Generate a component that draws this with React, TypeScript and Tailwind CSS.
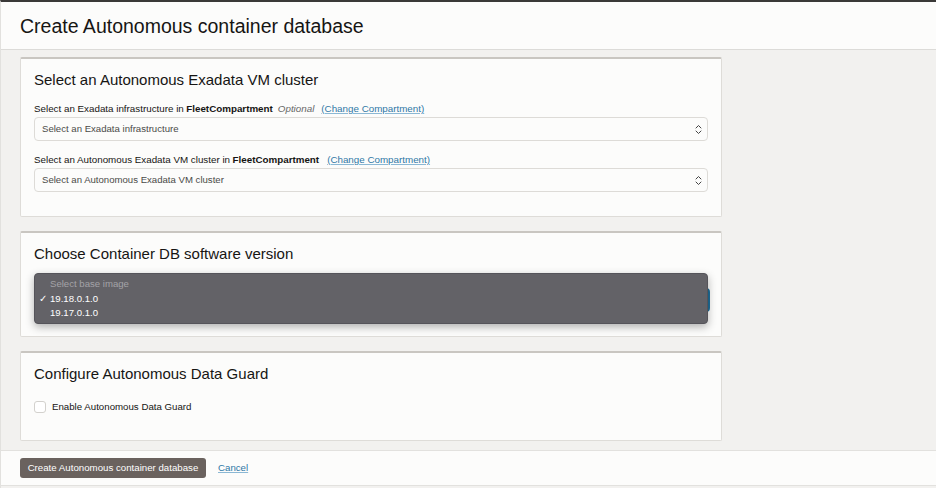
import React from "react";

function Chevrons() {
  return (
    <svg width="7" height="11" viewBox="0 0 7 11" className="shrink-0">
      <path d="M1 4 L3.5 1.5 L6 4" fill="none" stroke="#444" strokeWidth="1" strokeLinecap="round" strokeLinejoin="round" />
      <path d="M1 7 L3.5 9.5 L6 7" fill="none" stroke="#444" strokeWidth="1" strokeLinecap="round" strokeLinejoin="round" />
    </svg>
  );
}

function Select({ placeholder }: { placeholder: string }) {
  return (
    <div className="h-[24px] w-[674px] rounded-[4px] border border-[#dddbd7] bg-[#fcfcfb] flex items-center justify-between pl-[7px] pr-[5px]">
      <span className="text-[9.6px] text-[#4a4a48]">{placeholder}</span>
      <Chevrons />
    </div>
  );
}

function Card({ title, children, pb }: { title: string; children?: React.ReactNode; pb: string }) {
  return (
    <div className={`w-[702px] bg-[#fcfcfb] border border-[#dedcd8] border-t-2 border-t-[#c9c6c1] rounded-[2px] pl-[13px] pt-[11px] ${pb}`}>
      <div className="text-[15px] leading-[20px] text-[#161513]">{title}</div>
      {children}
    </div>
  );
}

export default function App() {
  return (
    <div className="w-[936px] h-[488px] bg-[#f2f1ef] flex flex-col border-t-2 border-t-[#3a3938] border-l border-l-[#e2e1de] font-['Liberation_Sans',Arial,sans-serif] text-[#161513] overflow-hidden">
      <header className="h-[48px] shrink-0 bg-[#fcfcfb] border-b border-b-[#dcdbd8] flex items-center pl-[19px]">
        <h1 className="text-[19.5px] leading-[24px] text-[#161513]">Create Autonomous container database</h1>
      </header>

      <main className="flex-1 flex flex-col gap-[14px] pl-[19px] pt-[7px]">
        <Card title="Select an Autonomous Exadata VM cluster" pb="pb-[24px]">
          <div className="mt-[13px] text-[9.8px] leading-[12px] flex items-center">
            <span>Select an Exadata infrastructure in </span>
            <span className="font-bold ml-[2.5px]">FleetCompartment</span>
            <span className="italic text-[#666] ml-[5px]">Optional</span>
            <span className="ml-[7px] text-[#2f78a6] underline decoration-[#8bb8d4]">(Change Compartment)</span>
          </div>
          <div className="mt-[2px]">
            <Select placeholder="Select an Exadata infrastructure" />
          </div>
          <div className="mt-[13px] text-[9.8px] leading-[12px] flex items-center">
            <span>Select an Autonomous Exadata VM cluster in </span>
            <span className="font-bold ml-[2.5px]">FleetCompartment</span>
            <span className="ml-[8px] text-[#2f78a6] underline decoration-[#8bb8d4]">(Change Compartment)</span>
          </div>
          <div className="mt-[2px]">
            <Select placeholder="Select an Autonomous Exadata VM cluster" />
          </div>
        </Card>

        <Card title="Choose Container DB software version" pb="pb-[24px]">
          <div className="mt-[24px] relative w-[676px]">
            <div className="h-[24px] w-[676px] rounded-[4px] border-2 border-[#1f6e98] bg-[#fcfcfb]" />
            <div className="absolute left-0 top-[-15px] w-[674px] h-[51px] rounded-[4px] bg-[#636267] border border-[#55545a] shadow-[0_3px_8px_rgba(0,0,0,0.3)] pt-[3px] text-[9.6px] leading-[14.5px]">
              <div className="pl-[15px] text-[#a3a3a7]">Select base image</div>
              <div className="flex items-center text-white">
                <span className="w-[15px] pl-[4px] text-[10px]">✓</span>
                <span>19.18.0.1.0</span>
              </div>
              <div className="pl-[15px] text-white">19.17.0.1.0</div>
            </div>
          </div>
        </Card>

        <Card title="Configure Autonomous Data Guard" pb="pb-[27px]">
          <div className="mt-[17px] flex items-center gap-[6px]">
            <div className="w-[12px] h-[12px] rounded-[3px] border border-[#d3d1cd] bg-white" />
            <span className="text-[9.7px] leading-[12px]">Enable Autonomous Data Guard</span>
          </div>
        </Card>
      </main>

      <footer className="h-[36px] shrink-0 mb-[2px] bg-[#fcfcfb] border-t border-t-[#e2e1de] border-b border-b-[#e2e1de] flex items-center pl-[19px] gap-[12px]">
        <button className="h-[20px] w-[186px] rounded-[3px] bg-[#6a625e] text-white text-[9.7px] flex items-center justify-center">
          Create Autonomous container database
        </button>
        <a className="text-[9.7px] text-[#2f78a6] underline decoration-[#8bb8d4]">Cancel</a>
      </footer>
    </div>
  );
}
